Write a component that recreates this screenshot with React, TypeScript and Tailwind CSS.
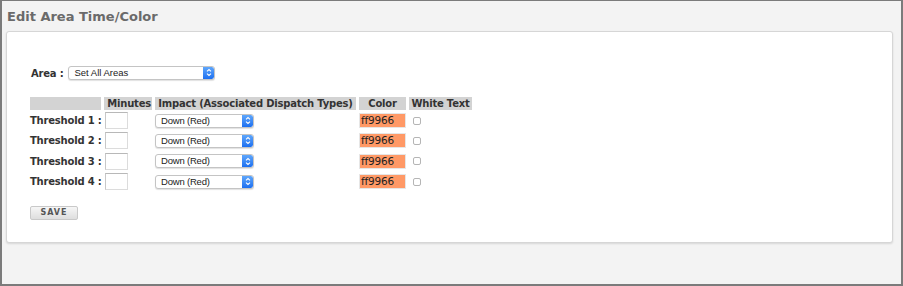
import React from "react"

const font = { fontFamily: '"DejaVu Sans", Verdana, sans-serif' }

function MacSelect({ label, width }: { label: string; width: string }) {
  return (
    <div
      className={`flex items-center h-[14px] ${width} bg-white border border-[#c4c4c4] rounded-[3px] shadow-[0_1px_1px_rgba(0,0,0,0.12)] overflow-hidden`}
    >
      <span
        className="flex-1 pl-[5px] text-[9.5px] leading-none text-[#222]"
        style={{ fontFamily: '"Liberation Sans", Arial, sans-serif' }}
      >
        {label}
      </span>
      <span className="flex items-center justify-center w-[11px] h-full bg-gradient-to-b from-[#5ea6fb] to-[#1c6ff0] rounded-r-[2px]">
        <svg width="6" height="9" viewBox="0 0 6 9" fill="none" stroke="white" strokeWidth="1.1">
          <path d="M1 3.3 L3 1.5 L5 3.3" />
          <path d="M1 5.7 L3 7.5 L5 5.7" />
        </svg>
      </span>
    </div>
  )
}

export default function App() {
  const rows = [1, 2, 3, 4]

  return (
    <div
      className="w-[903px] h-[286px] bg-[#f3f3f3] border-t border-l-2 border-r-2 border-b-2 border-[#7b7b7b] flex flex-col"
      style={font}
    >
      <h1 className="pl-[5px] pt-[8px] h-[30px] text-[13px] font-bold text-[#6a6a6a] leading-[16px]">
        Edit Area Time/Color
      </h1>

      <div className="ml-[4px] mr-[8px] h-[212px] bg-white border border-[#d6d6d6] rounded-[3px] shadow-[0_1px_2px_rgba(0,0,0,0.12)] pl-[23px] pt-[32px]">
        <div className="flex items-center gap-[5px]">
          <span className="text-[10px] tracking-[-0.2px] font-bold text-[#333] pl-[1px] pt-[2px]">Area :</span>
          <MacSelect label="Set All Areas" width="w-[147px]" />
        </div>

        <div className="mt-[16px] grid grid-cols-[71px_48px_201px_47px_63px] gap-x-[3px] gap-y-[1px] text-[10px] tracking-[-0.2px] text-[#333]">
          <div className="h-[13px] bg-[#d3d3d3]" />
          <div className="h-[13px] bg-[#d3d3d3] font-bold text-right pr-[1px] leading-[13px]">Minutes</div>
          <div className="h-[13px] bg-[#d3d3d3] font-bold text-center leading-[13px] whitespace-nowrap">
            Impact (Associated Dispatch Types)
          </div>
          <div className="h-[13px] bg-[#d3d3d3] font-bold text-center leading-[13px]">Color</div>
          <div className="h-[13px] bg-[#d3d3d3] font-bold text-center leading-[13px] whitespace-nowrap">White Text</div>

          {rows.map(n => (
            <React.Fragment key={n}>
              <div className="h-[19.3px] flex items-center font-bold whitespace-nowrap">Threshold {n} :</div>
              <div className="h-[19.3px] flex items-center">
                <div className="ml-[1px] w-[23px] h-[17px] bg-white border border-[#dcdcdc] border-t-[#b8b8b8] border-l-[#c8c8c8]" />
              </div>
              <div className="h-[19.3px] flex items-center">
                <MacSelect label="Down (Red)" width="w-[99px]" />
              </div>
              <div className="h-[19.3px] flex items-center">
                <div className="w-[47px] h-[15px] bg-[#ff9966] border border-[#e6e6e6] pl-[1px] text-[10.5px] tracking-[-0.2px] leading-[13px] text-[#222]">
                  ff9966
                </div>
              </div>
              <div className="h-[19.3px] flex items-center">
                <div className="ml-[4px] w-[8px] h-[8px] rounded-[2px] bg-white border border-[#b5b5b5]" />
              </div>
            </React.Fragment>
          ))}
        </div>

        <button className="mt-[15px] w-[48px] h-[14px] bg-gradient-to-b from-[#f6f6f6] to-[#dedede] border border-[#c9c9c9] rounded-[2px] text-[8px] font-bold tracking-[1px] text-[#555] leading-none">
          SAVE
        </button>
      </div>
    </div>
  )
}
